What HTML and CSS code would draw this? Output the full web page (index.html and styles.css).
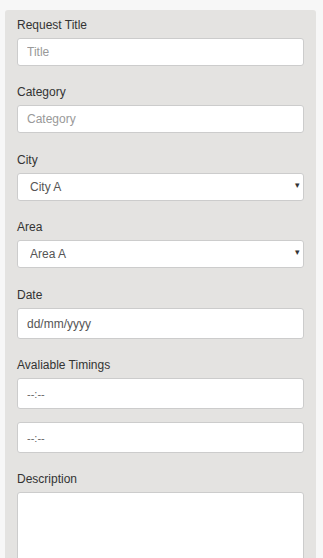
FILE: index.html
```html
<!DOCTYPE html>
<html lang="en">
<head>
  <meta charset="UTF-8">
  <meta name="viewport" content="width=device-width, initial-scale=1.0">
  <title>New Request</title>
  <link rel="stylesheet" href="styles.css">
</head>
<body>
  <div class="request-card">
    <!-- Request form -->
    <form class="request-form">
      <div class="form-group">
        <label for="title">Request Title</label>
        <input type="text" id="title" class="form-control" placeholder="Title">
      </div>

      <div class="form-group">
        <label for="category">Category</label>
        <input type="text" id="category" class="form-control" placeholder="Category">
      </div>

      <div class="form-group spaced">
        <label for="city">City</label>
        <div class="select-wrap">
          <select id="city" class="form-control select">
            <option>City A</option>
            <option>City B</option>
          </select>
          <span class="caret">▾</span>
        </div>
      </div>

      <div class="form-group">
        <label for="area">Area</label>
        <div class="select-wrap">
          <select id="area" class="form-control select">
            <option>Area A</option>
            <option>Area B</option>
          </select>
          <span class="caret">▾</span>
        </div>
      </div>

      <div class="form-group spaced">
        <label for="date">Date</label>
        <input type="text" id="date" class="form-control tall" value="dd/mm/yyyy">
      </div>

      <div class="form-group">
        <label for="time-from">Avaliable Timings</label>
        <input type="text" id="time-from" class="form-control tall time" value="--:--">
        <input type="text" id="time-to" class="form-control tall time" value="--:--">
      </div>

      <div class="form-group">
        <label for="description">Description</label>
        <textarea id="description" class="form-control textarea"></textarea>
      </div>
    </form>
  </div>
</body>
</html>
```

FILE: styles.css
```css
* {
  margin: 0;
  padding: 0;
  box-sizing: border-box;
}

body {
  font-family: 'Liberation Sans', Arial, sans-serif;
  font-size: 12px;
  background-color: #f7f7f7;
  color: #333;
  overflow: hidden;
}

/* Card */
.request-card {
  margin: 10px 7px 0 5px;
  background-color: #e4e3e1;
  border-radius: 3px 3px 0 0;
  padding: 7px 12px 0 12px;
  height: 560px;
}

.form-group {
  margin-bottom: 18px;
}

.form-group.spaced {
  padding-top: 1px;
}

.form-group label {
  display: block;
  line-height: 17px;
  margin-bottom: 4px;
}

.form-control {
  display: block;
  width: 100%;
  height: 28px;
  padding: 0 9px;
  font-family: inherit;
  font-size: 12px;
  color: #555;
  background-color: #fff;
  border: 1px solid #ccc;
  border-radius: 3px;
  outline: none;
}

.form-control::placeholder {
  color: #999;
}

.form-control.tall {
  height: 31px;
}

.form-control.time {
  color: #666;
  font-size: 11px;
}

.form-control.time + .form-control.time {
  margin-top: 13px;
}

/* Selects */
.select-wrap {
  position: relative;
}

.select {
  appearance: none;
  -webkit-appearance: none;
  padding-left: 12px;
}

.caret {
  position: absolute;
  right: 4px;
  top: 7px;
  font-size: 9px;
  color: #333;
  pointer-events: none;
}

.textarea {
  height: 90px;
  resize: none;
}
```
